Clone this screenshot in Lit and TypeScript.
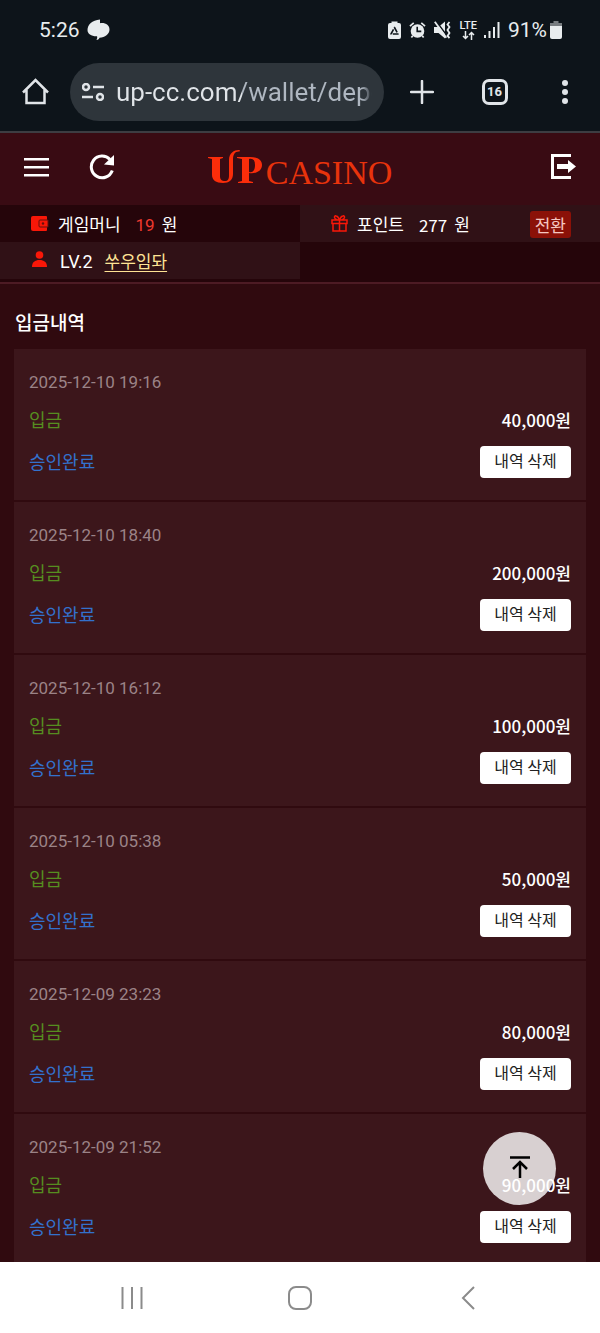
import { LitElement, html, css } from "lit";
import { customElement, property } from "lit/decorators.js";

interface Deposit { date: string; amount: string; }

const DEPOSITS: Deposit[] = [
  { date: "2025-12-10 19:16", amount: "40,000" },
  { date: "2025-12-10 18:40", amount: "200,000" },
  { date: "2025-12-10 16:12", amount: "100,000" },
  { date: "2025-12-10 05:38", amount: "50,000" },
  { date: "2025-12-09 23:23", amount: "80,000" },
  { date: "2025-12-09 21:52", amount: "90,000" },
];

@customElement("status-bar")
class StatusBar extends LitElement {
  static styles = css`
    :host { display: flex; align-items: center; height: 60px; padding: 0 38px 0 39px; color: #e8ecee; font: 21px/24px Roboto, sans-serif; }
    .chat { margin-left: 7px; }
    .right { margin-left: auto; display: flex; align-items: center; }
    .right svg { margin-right: 8px; }
    .right .signal { margin-right: 8px; }
    .right .power { margin: 0 0 0 3px; }
    svg { display: block; fill: currentColor; }
    .net { display: flex; flex-direction: column; align-items: center; margin-right: 7px; font: 500 11px/10px Roboto, sans-serif; }
    .right .net svg { margin: 0; }
  `;
  render() {
    return html`
      <span>5:26</span>
      <svg class="chat" width="23" height="22" viewBox="0 0 23 22"><path d="M13 .5v3.700C18.500 3.500 22.500 6 22.500 10.500c0 4.500-4.500 8-10 8.300-.3 1-1.200 2-3 2.200.8-1.500.9-2.800.5-3.700C4.500 17.500.5 15 .5 11 .5 6 5 1 13 .5z"/></svg>
      <div class="right">
        <svg width="13" height="18" viewBox="0 0 13 18"><path d="M3.500 2V.5h6V2H11a2 2 0 0 1 2 2v12a2 2 0 0 1-2 2H2a2 2 0 0 1-2-2V4a2 2 0 0 1 2-2z"/><path d="M6.500 6.500 10 13H3z" fill="none" stroke="#0d141a" stroke-width="1.600" stroke-linejoin="round" stroke-dasharray="5.500 1.600"/></svg>
        <svg width="17" height="18" viewBox="0 0 18 18"><circle cx="9" cy="10" r="7.200"/><path d="M1 5 5 1.500M17 5l-4-3.500M4 15l-1.500 2M14 15l1.500 2" stroke="currentColor" stroke-width="1.800"/><path d="M8.700 5.500v5H13" fill="none" stroke="#0d141a" stroke-width="1.700"/></svg>
        <svg width="17" height="18" viewBox="0 0 17 18"><path d="M0 6h4.500L11 .5v17L4.500 12H0z"/><path d="m2 0 12 16" stroke="#0d141a" stroke-width="1.500"/><path d="m.8 .8 11.500 16" stroke="currentColor" stroke-width="1.800"/><path d="M15.500 1l-2 2.500 2 2.500-2 3 2 3-2 3 2 2" fill="none" stroke="currentColor" stroke-width="1.800"/></svg>
        <div class="net"><span>LTE</span><svg width="13" height="9" viewBox="0 0 13 9"><path d="M3.500 0v7M1 5l2.500 2.500L6 5M9.500 9V1.500M7 4l2.500-2.500L12 4" fill="none" stroke="currentColor" stroke-width="1.500"/></svg></div>
        <svg class="signal" width="16" height="16" viewBox="0 0 16 16"><path d="M0 13h2v3H0zM4.500 9h2v7h-2zM9 5h2v11H9zM13.500 0h2v16h-2z"/></svg>
        <span>91%</span>
        <svg class="power" width="12" height="18" viewBox="0 0 12 18"><path fill="#777c80" d="M3.500 2V0h5v2H12v4H0V2z"/><path d="M0 5h12v11a2 2 0 0 1-2 2H2a2 2 0 0 1-2-2z"/></svg>
      </div>`;
  }
}

@customElement("browser-bar")
class BrowserBar extends LitElement {
  static styles = css`
    :host { display: flex; align-items: center; height: 73px; padding: 0 22px; border-bottom: 2px solid #3d3d42; box-sizing: border-box; color: #e0e4e8; }
    button { display: grid; place-items: center; border: 0; padding: 0; background: none; color: inherit; }
    svg { display: block; fill: none; stroke: currentColor; stroke-width: 2.500; }
    .address { flex: 1; min-width: 0; height: 58px; margin: 0 26px 8px 21px; padding: 0 12px; border-radius: 29px; background: #2e353b; display: flex; align-items: center; box-sizing: border-box; }
    .home, .add, .tabs, .more { height: 40px; margin-bottom: 8px; }
    input { flex: 1; min-width: 0; margin-left: 12px; padding: 0; border: 0; outline: 0; color: transparent; background: linear-gradient(90deg, #e0e4e8 126px, #afb7c1 126px, #afb7c1 96%, transparent); background-clip: text; -webkit-background-clip: text; font: 26px/34px Roboto, sans-serif; }
    .tabs { width: 27px; margin-left: 47px; }
    .count { width: 26px; height: 26px; border: 3px solid; border-radius: 7px; box-sizing: border-box; font: 700 13px/20px Roboto, sans-serif; }
    .more { margin-left: 52px; width: 10px; margin-right: 8px; }
    .more svg { fill: currentColor; stroke: none; }
  `;
  render() {
    return html`
      <button class="home" aria-label="Home"><svg width="27" height="27" viewBox="0 0 27 27"><path d="M1 14.500 13.500 2 26 14.500M4.500 12v13h18V12"/></svg></button>
      <div class="address">
        <svg width="22" height="18" viewBox="0 0 22 18"><circle cx="4" cy="4" r="3"/><path d="M11 4h11M0 14h11"/><circle cx="18" cy="14" r="3"/></svg>
        <input aria-label="URL" value="up-cc.com/wallet/deposit">
      </div>
      <button class="add" aria-label="New tab"><svg width="24" height="24" viewBox="0 0 24 24" stroke-linecap="round"><path d="M12 1v22M1 12h22"/></svg></button>
      <button class="tabs" aria-label="Tabs"><span class="count">16</span></button>
      <button class="more" aria-label="Menu"><svg width="6" height="24" viewBox="0 0 6 24"><circle cx="3" cy="3" r="3"/><circle cx="3" cy="12" r="3"/><circle cx="3" cy="21" r="3"/></svg></button>`;
  }
}

@customElement("site-header")
class SiteHeader extends LitElement {
  static styles = css`
    :host { display: block; color: #fff; border-bottom: 2px solid #4d1b24; font: 17px/24px Roboto, "Noto Sans CJK KR", sans-serif; }
    button { border: 0; padding: 0; background: none; color: inherit; display: block; }
    svg { display: block; fill: currentColor; }
    .top { display: grid; grid-template-columns: 1fr auto 1fr; align-items: center; height: 72px; padding: 0 24px; background: #390b13; }
    .left { display: flex; gap: 40px; padding-bottom: 4px; }
    .exit { justify-self: end; padding-bottom: 4px; }
    .logo { display: flex; align-items: baseline; color: #fb2d0a; text-decoration: none; font-family: "Liberation Serif", serif; }
    .brand { width: 56px; height: 36px; }
    .word { margin-left: 2px; color: #e8330c; font-size: 34px; line-height: 36px; }
    .info { display: grid; grid-template-columns: 1fr 1fr; grid-auto-rows: 37px; padding-bottom: 3px; background: #25050a; }
    .cell { display: flex; align-items: center; padding: 2px 29px 0 31px; background: #25050a; }
    .lit { background: #301116; }
    .cell svg { color: #f91708; margin: 0 9px 2px 0; }
    .cell .person { margin: 0 13px 6px 1px; }
    .value { margin-left: 15px; }
    .points { font-family: "Noto Sans CJK KR", sans-serif; }
    .red { color: #ee3a2f; }
    .unit { margin-left: 7px; }
    .cell .swap { margin-left: auto; padding: 0 5px; height: 27px; border-radius: 3px; background: #8b1108; color: #f5c7c1; font: 17px/26px "Noto Sans CJK KR", sans-serif; }
    .level { font-size: 18px; }
    .name { margin-left: 12px; color: #ffe495; text-underline-offset: 3px; }
  `;
  render() {
    return html`
      <header class="top">
        <div class="left">
          <button aria-label="메뉴"><svg width="25" height="26" viewBox="0 0 25 26"><path d="M0 4h25v2.500H0zM0 12h25v2.500H0zM0 20h25v2.500H0z"/></svg></button>
          <button aria-label="새로고침"><svg width="26" height="26" viewBox="0 0 26 26"><path fill="none" stroke="currentColor" stroke-width="3" d="M21 5.500A10.800 10.800 0 1 0 23.300 16.500"/><path d="M25 1v10.500L15 10.500z"/></svg></button>
        </div>
        <a class="logo" href="#" aria-label="UP CASINO">
          <svg class="brand" viewBox="0 0 56 36"><path d="M0 9h15v1l-3 1v17c0 4 2 5 5 5s4-2 4-6V12C21 5 26 2 31 2l1 .5-.5 1C27 3 25 6 25 12v14c0 6-4 9-10 9-7 0-11-3-11-8V11l-4-1z"/><path fill-rule="evenodd" d="M29 9h13c8 0 12 3 12 8 0 6-6 9-13 8v8l4 1v1H30v-1l4-1V11l-5-1zM41 11v13c4 1 6-2 6-7s-2-7-6-6z"/></svg>
          <span class="word">CASINO</span>
        </a>
        <button class="exit" aria-label="로그아웃"><svg width="25" height="26" viewBox="0 0 25 26"><path d="M0 0h20v3H3v19h17v3H0z"/><path d="M6 10h11V6l8 6.500-8 6.500v-4H6z"/></svg></button>
      </header>
      <div class="info">
        <div class="cell">
          <svg width="18" height="15" viewBox="0 0 18 15"><path d="M2 0h13a1 1 0 0 1 1 1v13a1 1 0 0 1-1 1H2a2 2 0 0 1-2-2V2a2 2 0 0 1 2-2z"/><path d="M9 4h8v7H9a1 1 0 0 1-1-1V5a1 1 0 0 1 1-1z" stroke="#65100c"/><circle cx="12" cy="7.500" r="1.200" fill="#65100c"/></svg>
          <span>게임머니</span><span class="value red">19</span><span class="unit">원</span>
        </div>
        <div class="cell lit">
          <svg width="17" height="17" viewBox="0 0 17 17"><path fill="none" stroke="currentColor" stroke-width="1.500" d="M1 5h15v3.500H1zM2 8.500h13V16H2zM8.500 5v11M8.500 5C2 5 3 0 5 1c2 0 3.500 4 3.500 4S10 1 12 1c2-1 3 4-3.500 4"/></svg>
          <span>포인트</span><span class="value points">277</span><span class="unit">원</span><button class="swap">전환</button>
        </div>
        <div class="cell lit">
          <svg class="person" width="15" height="16" viewBox="0 0 15 16"><circle cx="7.500" cy="4" r="3.800"/><path d="M0 16c0-5 3-7 7.500-7S15 11 15 16z"/></svg>
          <span class="level">LV.2</span><a class="name" href="#">쑤우임돠</a>
        </div>
      </div>`;
  }
}

@customElement("deposit-card")
class DepositCard extends LitElement {
  @property({ attribute: false }) item!: Deposit;
  static styles = css`
    :host { display: block; padding: 21px 15px; border-bottom: 2px solid #300a0f; background: #3c161b; color: #fff; font: 17px/25px "Noto Sans CJK KR", sans-serif; }
    time { display: block; color: #9b8387; font: 17px/25px Roboto, sans-serif; }
    .row { display: flex; justify-content: space-between; align-items: center; height: 49px; }
    .last { height: 35px; }
    .kind, .state { font-size: 18px; }
    .kind { color: #568d20; }
    .amount { font-weight: 500; }
    .state { color: #3371cd; }
    button { width: 91px; height: 32px; padding: 0 0 4px; border: 0; border-radius: 4px; background: #fff; color: #222; font: 16px/28px "Noto Sans CJK KR", sans-serif; }
  `;
  render() {
    return html`
      <time>${this.item.date}</time>
      <div class="row"><span class="kind">입금</span><span class="amount">${this.item.amount}원</span></div>
      <div class="row last"><span class="state">승인완료</span><button>내역 삭제</button></div>`;
  }
}

@customElement("app-root")
class AppRoot extends LitElement {
  static styles = css`
    :host { display: flex; flex-direction: column; height: 100vh; background: #300a0f; overflow: hidden; }
    .chrome { background: #0d141a; flex: none; }
    site-header { flex: none; }
    main { flex: 1; min-height: 0; overflow: hidden; padding: 0 14px; }
    h1 { margin: 0; padding: 25px 1px 14px; color: #fff; font: 500 19px/26px "Noto Sans CJK KR", sans-serif; }
    .view { flex: 1; min-height: 0; display: flex; flex-direction: column; position: relative; }
    .to-top { position: absolute; right: 44px; bottom: 57px; width: 73px; height: 73px; border: 0; padding: 0 0 4px; border-radius: 50%; background: rgba(255, 255, 255, 0.8); display: grid; place-items: center; }
    svg { display: block; fill: none; stroke: #8b8b8b; stroke-width: 2; }
    .to-top svg { stroke: #000; stroke-width: 2.500; }
    .nav { flex: none; height: 71px; background: #fff; display: grid; grid-template-columns: repeat(3, 1fr); align-items: center; padding: 0 48px; }
    .nav button { border: 0; padding: 0; background: none; display: grid; place-items: center; }
  `;
  render() {
    return html`
      <div class="chrome"><status-bar></status-bar><browser-bar></browser-bar></div>
      <div class="view">
        <site-header></site-header>
        <main>
          <h1>입금내역</h1>
          ${DEPOSITS.map((d) => html`<deposit-card .item=${d}></deposit-card>`)}
        </main>
        <button class="to-top" aria-label="맨 위로"><svg width="20" height="22" viewBox="0 0 20 22"><path d="M0 1.500h20M10 22V6M3 13l7-7 7 7"/></svg></button>
      </div>
      <nav class="nav">
        <button aria-label="최근 앱"><svg width="22" height="22" viewBox="0 0 22 22"><path d="M1.500 0v22M11 0v22M20.500 0v22"/></svg></button>
        <button aria-label="홈"><svg width="24" height="24" viewBox="0 0 24 24"><rect x="1" y="1" width="22" height="22" rx="7"/></svg></button>
        <button aria-label="뒤로"><svg width="14" height="24" viewBox="0 0 14 24"><path d="M13 1 2 12l11 11"/></svg></button>
      </nav>`;
  }
}
